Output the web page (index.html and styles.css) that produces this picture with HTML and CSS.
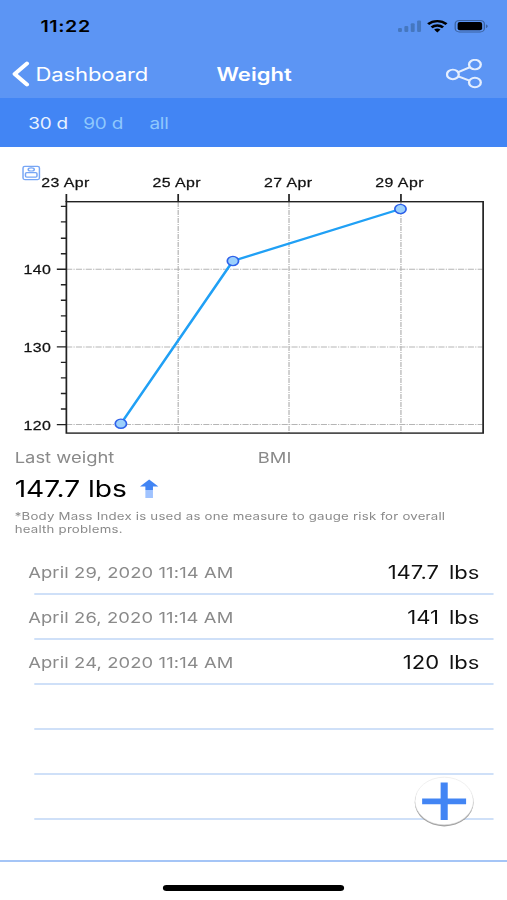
FILE: index.html
```
<!DOCTYPE html>
<html lang="en">
<head>
    <meta charset="UTF-8">
    <meta name="viewport" content="width=device-width, initial-scale=1.0">
    <title>Weight</title>
    <link rel="stylesheet" href="styles.css">
</head>
<body>
<div class="screen">
    <header class="header">
        <div class="status-bar">
            <span class="time">11:22</span>
            <svg class="status-icons" width="74" height="16" viewBox="0 0 74 16">
                <g fill="#4577bf">
                    <rect x="0" y="11" width="3.2" height="4" rx="1"/>
                    <rect x="5.2" y="9" width="3.2" height="6" rx="1"/>
                    <rect x="10.4" y="6.3" width="3.2" height="8.7" rx="1"/>
                    <rect x="15.6" y="3.4" width="3.2" height="11.6" rx="1"/>
                </g>
                <g fill="none" stroke="#000" stroke-width="2.3">
                    <path d="M24.6 7.2a10.8 10.8 0 0 1 15 0"/>
                    <path d="M27.4 10.4a6.8 6.8 0 0 1 9.4 0"/>
                </g>
                <path d="M29.5 12.6a4 4 0 0 1 5.2 0L32.1 15.4z"/>
                <rect x="46.7" y="3.4" width="23.8" height="11.6" rx="3.4" fill="none" stroke="#3b62a0"/>
                <rect x="48.7" y="5.1" width="20" height="8.2" rx="1.8"/>
                <path d="M71.8 7.4c2 .6 2 3 0 3.6z" fill="#3b62a0"/>
            </svg>
        </div>
        <div class="nav-bar">
            <a class="back">
                <svg width="14" height="26" viewBox="0 0 14 26">
                    <path d="M12 2.5L2 13l10 10.5" fill="none" stroke="#fff" stroke-width="3.6" stroke-linecap="round" stroke-linejoin="round"/>
                </svg>
                <span>Dashboard</span>
            </a>
            <h1 class="title">Weight</h1>
            <svg class="share" width="30" height="30" viewBox="0 0 30 30">
                <g fill="none" stroke="#e4eefe" stroke-width="1.9">
                    <circle cx="5.8" cy="15.4" r="4.8"/>
                    <circle cx="23.8" cy="5.6" r="4.8"/>
                    <circle cx="23.8" cy="23.5" r="4.8"/>
                    <path d="M10.2 13.2l9.2-4.9M10.2 17.3l9.2 4.3"/>
                </g>
            </svg>
        </div>
    </header>
    <nav class="tabs">
        <a class="tab active">30 d</a>
        <a class="tab">90 d</a>
        <a class="tab tab-all">all</a>
    </nav>

    <svg class="chart" width="414" height="297" viewBox="0 147 414 297">
        <!-- scale icon -->
        <g fill="none" stroke="#77a6f5" stroke-width="1.2">
            <rect x="18.8" y="166.4" width="13.4" height="13.2" rx="1.5"/>
            <rect x="20.8" y="172.7" width="9.4" height="4.4" rx="1"/>
            <ellipse cx="25.5" cy="169.4" rx="2.5" ry="1.6"/>
        </g>

        <g class="grid">
            <path d="M145.5 202V433M236 202V433M327.4 202V433"/>
            <path d="M54 269.3H394M54 346.9H394M54 424.6H394"/>
        </g>
        <g class="axis">
            <path d="M54.2 194V202M145.5 194V202M236 194V202M327.4 194V202"/>
            <path d="M46.4 269.3H54M46.4 346.9H54M46.4 424.6H54"/>
            <path d="M49.7 206.4H54M49.7 221.9H54M49.7 238.3H54M49.7 253.8H54M49.7 284.8H54M49.7 300.3H54M49.7 315.9H54M49.7 331.4H54M49.7 362.4H54M49.7 377.9H54M49.7 393.5H54M49.7 409H54"/>
            <rect x="54.2" y="201.7" width="340.3" height="231.4"/>
        </g>

        <g class="labels">
            <text x="33.7" y="186.6">23 Apr</text>
            <text x="124.5" y="186.6">25 Apr</text>
            <text x="215.5" y="186.6">27 Apr</text>
            <text x="306.5" y="186.6">29 Apr</text>
            <text x="19.2" y="274">140</text>
            <text x="19.2" y="352">130</text>
            <text x="19.2" y="430">120</text>
        </g>

        <path class="line" d="M98.7 423.7L190.2 261L327 209"/>
        <g class="points">
            <circle cx="98.7" cy="423.7" r="4.6"/>
            <circle cx="190.2" cy="261" r="4.6"/>
            <circle cx="327" cy="209" r="4.6"/>
        </g>
    </svg>

    <section class="summary">
        <div class="summary-labels">
            <span class="last">Last weight</span>
            <span>BMI</span>
        </div>
        <div class="current">
            <span>147.7 lbs</span>
            <svg width="16" height="20" viewBox="0 0 16 20">
                <path d="M.3 7.6L7.8 .4l7.5 7.2z" fill="#4285f4"/>
                <path d="M4.7 7H10.9v4H4.7z" fill="#4285f4"/>
                <path d="M4.7 11H10.9v8H4.7z" fill="#a0c3ff"/>
            </svg>
        </div>
        <p class="note">*Body Mass Index is used as one measure to gauge risk for overall<br>health problems.</p>
    </section>

    <ul class="entries">
        <li><span class="date">April 29, 2020 11:14 AM</span><span class="value">147.7 <b>lbs</b></span></li>
        <li><span class="date">April 26, 2020 11:14 AM</span><span class="value">141 <b>lbs</b></span></li>
        <li><span class="date">April 24, 2020 11:14 AM</span><span class="value">120 <b>lbs</b></span></li>
        <li></li>
        <li></li>
        <li></li>
    </ul>

    <footer class="footer">
        <div class="home-indicator"></div>
    </footer>

    <a class="add">
        <svg width="50" height="52" viewBox="0 0 50 52">
            <circle cx="24.7" cy="26.4" r="24" fill="#a0a0a0"/>
            <circle cx="24.7" cy="25" r="23.8" fill="#fff" stroke="#e4e4e4" stroke-width=".5"/>
            <path d="M24.7 6.5V44M6.7 25.3H42.6" stroke="#4285f4" stroke-width="5.8"/>
        </svg>
    </a>
</div>
</body>
</html>
```
FILE: styles.css
```
body {
    margin: 0;
    overflow: hidden;
    background-color: white;
    font-family: Inter, "Liberation Sans", sans-serif;
}

.screen {
    position: relative;
    display: flex;
    flex-direction: column;
    width: 414px;
    height: 900px;
    transform: scaleX(1.22464);
    transform-origin: 0 0;
}

.header {
    height: 98px;
    background-color: #5c95f4;
}

.status-bar {
    display: flex;
    justify-content: space-between;
    align-items: center;
    height: 50px;
    padding: 3px 15.5px 0 33px;
    box-sizing: border-box;
}

.time {
    font-size: 16px;
    font-weight: 600;
    letter-spacing: 0.5px;
    margin-top: -1px;
}

.status-icons {
    margin-top: -3px;
}

.nav-bar {
    display: grid;
    grid-template-columns: 1fr auto 1fr;
    align-items: center;
    height: 48px;
    padding: 0 20px 0 10px;
    color: white;
}

.back {
    display: flex;
    align-items: center;
    gap: 5px;
    font-size: 18px;
    letter-spacing: -0.1px;
}

.title {
    margin: 0 -5.5px 0 5.5px;
    font-size: 18px;
    font-weight: 600;
}

.share {
    justify-self: end;
}

.tabs {
    display: flex;
    align-items: center;
    height: 49px;
    padding: 1px 0 0 23px;
    box-sizing: border-box;
    background-color: #4285f4;
    font-size: 15.5px;
    letter-spacing: -0.2px;
}

.tab {
    width: 45px;
    color: #8fc8fd;
}

.tab.active {
    color: #e8f1ff;
}

.tab-all {
    margin-left: 9px;
}

.chart {
    display: block;
}

.grid {
    fill: none;
    stroke: #b5b5b5;
    stroke-width: 1;
    stroke-dasharray: 5 1 1 1;
}

.axis {
    fill: none;
    stroke: #222;
    stroke-width: 1.4;
}

.labels {
    font-family: "Liberation Sans", Arial, sans-serif;
    font-size: 13px;
    letter-spacing: 0.35px;
    fill: #111;
    stroke: #111;
    stroke-width: 0.25;
}

.line {
    fill: none;
    stroke: #20a0f5;
    stroke-width: 2.2;
}

.points {
    fill: #9cd0fb;
    stroke: #2f62ea;
    stroke-width: 1.4;
}

.summary {
    height: 105px;
    padding-left: 12px;
}

.summary-labels {
    display: flex;
    padding-top: 4px;
    color: #8a8a8a;
    font-size: 15px;
    line-height: 19px;
}

.last {
    width: 198.5px;
}

.current {
    display: flex;
    align-items: center;
    gap: 11px;
    height: 43px;
    font-size: 23px;
    letter-spacing: -0.05px;
}

.note {
    margin: 0;
    color: #8a8a8a;
    font-size: 10.8px;
    line-height: 13px;
    letter-spacing: 0.18px;
}

.entries {
    margin: 0;
    padding: 0;
    list-style: none;
}

.entries li {
    display: flex;
    justify-content: space-between;
    align-items: center;
    box-sizing: border-box;
    height: 45px;
    padding: 0 22.5px 0 23px;
    border-bottom: 1px solid transparent;
    background: linear-gradient(#cfe0f8, #cfe0f8) 28px 100% / 375px 2px no-repeat border-box;
    padding-top: 1px;
}

.date {
    color: #8a8a8a;
    font-size: 15px;
    letter-spacing: 0.1px;
}

.value {
    font-size: 18px;
    color: #111;
}

.value b {
    margin-left: 3px;
    font-weight: normal;
}

.footer {
    display: flex;
    justify-content: center;
    flex: 1;
    margin-top: 41px;
    border-top: 2px solid #a5c5f6;
}

.home-indicator {
    width: 148px;
    height: 6px;
    margin-top: 23px;
    border-radius: 3px;
    background-color: black;
}

.add {
    position: absolute;
    left: 338px;
    top: 776px;
}

.entries {
    padding-top: 1px;
    margin-bottom: -1px;
}
```
